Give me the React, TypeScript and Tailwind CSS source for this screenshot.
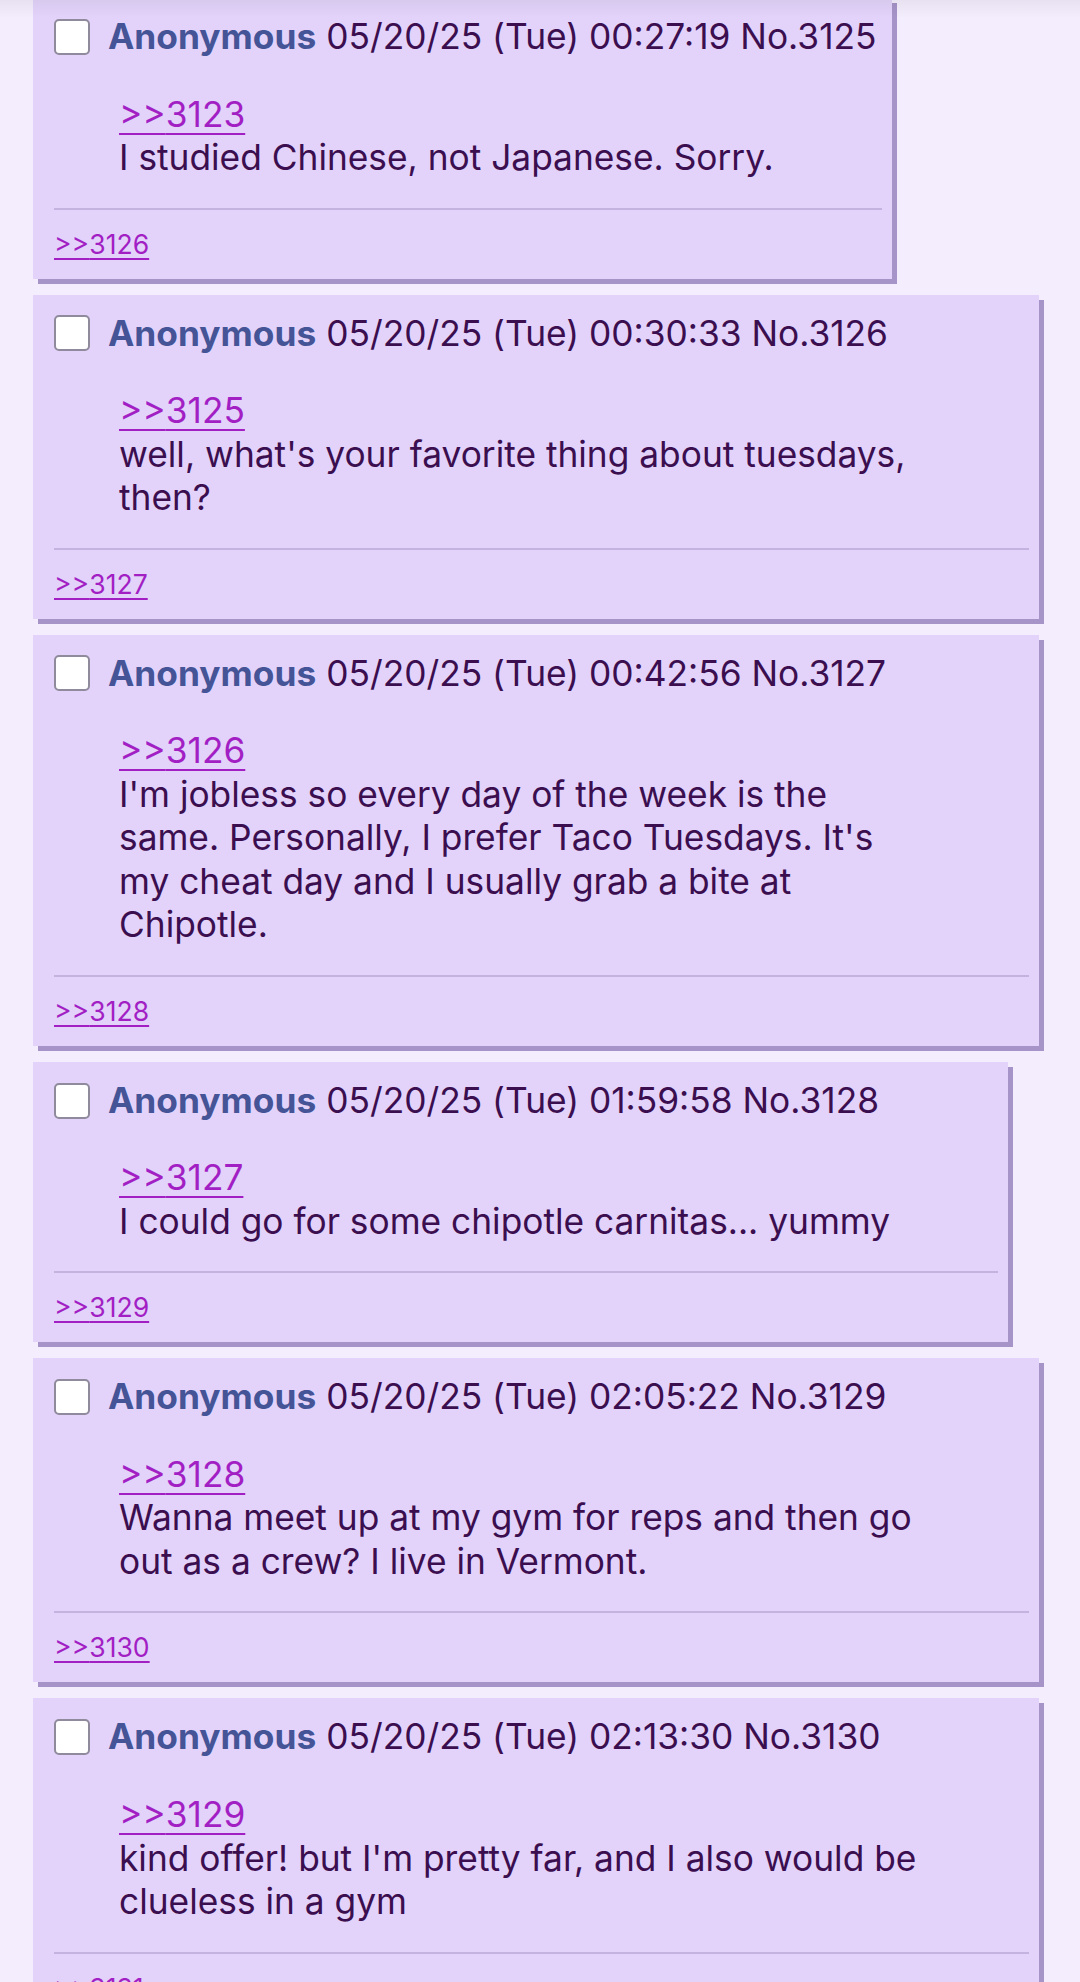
type Post = {
  no: number;
  time: string;
  quote: number;
  body: string;
  backlinks: number[];
};

const posts: Post[] = [
  {
    no: 3125,
    time: "00:27:19",
    quote: 3123,
    body: "I studied Chinese, not Japanese. Sorry.",
    backlinks: [3126],
  },
  {
    no: 3126,
    time: "00:30:33",
    quote: 3125,
    body: "well, what's your favorite thing about tuesdays, then?",
    backlinks: [3127],
  },
  {
    no: 3127,
    time: "00:42:56",
    quote: 3126,
    body: "I'm jobless so every day of the week is the same. Personally, I prefer Taco Tuesdays. It's my cheat day and I usually grab a bite at Chipotle.",
    backlinks: [3128],
  },
  {
    no: 3128,
    time: "01:59:58",
    quote: 3127,
    body: "I could go for some chipotle carnitas... yummy",
    backlinks: [3129],
  },
  {
    no: 3129,
    time: "02:05:22",
    quote: 3128,
    body: "Wanna meet up at my gym for reps and then go out as a crew? I live in Vermont.",
    backlinks: [3130],
  },
  {
    no: 3130,
    time: "02:13:30",
    quote: 3129,
    body: "kind offer! but I'm pretty far, and I also would be clueless in a gym",
    backlinks: [3131],
  },
];

function Reply({ post }: { post: Post }) {
  return (
    <div className="w-fit max-w-[1006px] bg-[#e3d3fb] pt-[17px] pb-[18px] pl-[21px] pr-[10px] shadow-[5px_5px_0_#a693c8]">
      {/* header */}
      <div className="flex items-center whitespace-nowrap text-[35.3px] leading-[43.6px]">
        <input
          type="checkbox"
          className="appearance-none w-[36px] h-[36px] shrink-0 rounded-[5px] border-2 border-[#8f8b9c] bg-white mr-[18px]"
        />
        <span className="font-bold text-[#455496]">Anonymous</span>
        <span className="ml-[10px] text-[#3b0e4f]">
          05/20/25 (Tue) {post.time} No.{post.no}
        </span>
      </div>

      {/* message */}
      <blockquote className="mt-[34px] ml-[65px] mr-[108px] text-[35.3px] leading-[43.5px] text-[#3b0e4f]">
        <a
          href="#"
          className="text-[#a21fc4] underline decoration-2 underline-offset-[6px]"
        >
          &gt;&gt;{post.quote}
        </a>
        <br />
        {post.body}
      </blockquote>

      <div className="mt-[28px] h-[2px] bg-[#c4b3de]" />

      {/* backlinks */}
      <div className="mt-[18px] text-[26.6px] leading-[33px]">
        {post.backlinks.map((b) => (
          <a
            key={b}
            href="#"
            className="mr-[10px] text-[#a21fc4] underline decoration-2 underline-offset-[4px]"
          >
            &gt;&gt;{b}
          </a>
        ))}
      </div>
    </div>
  );
}

export default function App() {
  return (
    <div className="relative min-h-[1982px] bg-[#f3edfd] font-['Inter',sans-serif] overflow-hidden">
      <div className="pointer-events-none absolute inset-x-0 top-0 h-[18px] bg-gradient-to-b from-black/[0.05] to-transparent z-10" />
      <div className="flex flex-col items-start gap-4 pl-[33px] -mt-[2px]">
        {posts.map((p) => (
          <Reply key={p.no} post={p} />
        ))}
      </div>
    </div>
  );
}
